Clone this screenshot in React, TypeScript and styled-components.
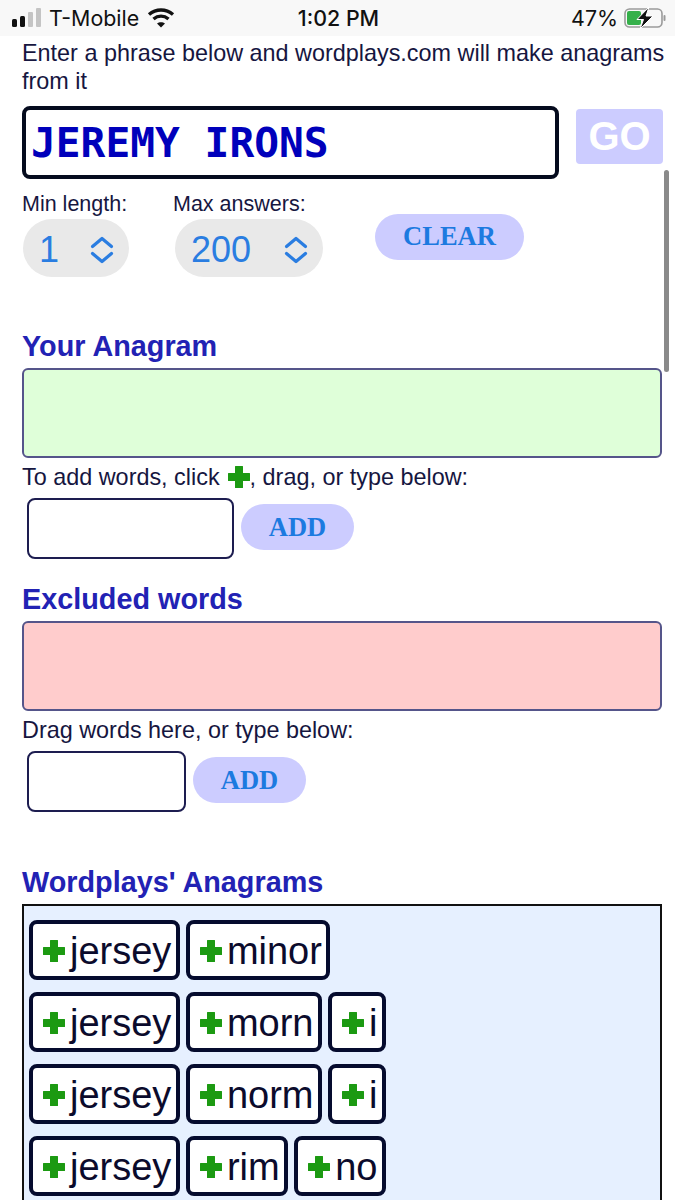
import React from 'react';
import styled, { createGlobalStyle } from 'styled-components';

const GlobalStyle = createGlobalStyle`
  html, body {
    margin: 0;
    padding: 0;
    height: 1200px;
    overflow: hidden;
    background: #fff;
    font-family: "Liberation Sans", Arial, sans-serif;
    color: #16163f;
  }
`;

const Page = styled.div`
  position: relative;
  width: 675px;
  height: 1200px;
  overflow: hidden;
`;

const StatusBar = styled.div`
  display: grid;
  grid-template-columns: 1fr auto 1fr;
  align-items: center;
  height: 36px;
  padding: 0 9px 0 11px;
  background: #f8f8f8;
  color: #111;
  font-family: "Inter", "Liberation Sans", sans-serif;
  font-size: 21.4px;
`;

const StatusLeft = styled.div`
  display: flex;
  align-items: center;
  gap: 8px;
`;

const StatusRight = styled.div`
  display: flex;
  align-items: center;
  justify-content: flex-end;
  gap: 6px;
`;

const Clock = styled.div`
  font-weight: 500;
`;

const Content = styled.div`
  padding: 3px 8px 0 22px;
`;

const Intro = styled.p`
  margin: 0 0 11px;
  font-size: 23.4px;
  line-height: 28px;
`;

const PhraseRow = styled.div`
  display: flex;
  align-items: flex-start;
  gap: 17px;
`;

const PhraseInput = styled.div`
  box-sizing: border-box;
  flex: none;
  width: 537px;
  height: 73px;
  padding: 0 5px;
  border: 4px solid #050b1e;
  border-radius: 8px;
  color: #0000bb;
  font-family: "DejaVu Sans Mono", "Liberation Mono", monospace;
  font-size: 41.2px;
  font-weight: 700;
  line-height: 66px;
  white-space: pre;
`;

const GoButton = styled.div`
  display: flex;
  flex: none;
  align-items: center;
  justify-content: center;
  width: 87px;
  height: 55px;
  margin-top: 3px;
  border-radius: 4px;
  background: #ccccff;
  color: #fff;
  font-size: 40px;
  font-weight: 700;
`;

const OptionsRow = styled.div`
  display: flex;
  align-items: flex-start;
  margin-top: 12px;
  height: 138px;
`;

const Option = styled.div<{ $width: number }>`
  width: ${(p) => p.$width}px;
`;

const OptionLabel = styled.div`
  font-size: 21.5px;
  line-height: 26px;
`;

const SelectPill = styled.div<{ $width: number; $offset: number }>`
  display: flex;
  align-items: center;
  justify-content: space-between;
  box-sizing: border-box;
  width: ${(p) => p.$width}px;
  height: 58px;
  margin: 2px 0 0 ${(p) => p.$offset}px;
  padding: 3px 15px 0 16px;
  border-radius: 29px;
  background: #e9e9e9;
  color: #2a7de1;
  font-size: 36px;
`;

const PillButton = styled.div<{ $width: number }>`
  display: flex;
  align-items: center;
  justify-content: center;
  width: ${(p) => p.$width}px;
  height: 46px;
  margin-bottom: 3px;
  border-radius: 23px;
  background: #ccccff;
  color: #1c7ae0;
  font-family: "Liberation Serif", "Times New Roman", serif;
  font-size: 26.5px;
  font-weight: 700;
`;

const ClearButton = styled(PillButton)`
  margin: 23px 0 0 53px;
  padding-bottom: 2px;
  box-sizing: border-box;
`;

const Heading = styled.h2`
  margin: 0 0 5px;
  color: #2222b4;
  font-size: 28.8px;
  font-weight: 700;
  line-height: 34px;
`;

const DropZone = styled.div<{ $bg: string }>`
  box-sizing: border-box;
  width: 640px;
  height: 90px;
  border: 2px solid #55558a;
  border-radius: 6px;
  background: ${(p) => p.$bg};
`;

const HelpText = styled.div`
  display: flex;
  align-items: center;
  margin-top: 5px;
  font-size: 23.4px;
  line-height: 28px;
`;

const AddRow = styled.div`
  display: flex;
  align-items: center;
  gap: 7px;
  margin: 7px 0 23px 5px;
`;

const WordInput = styled.div<{ $width: number }>`
  box-sizing: border-box;
  width: ${(p) => p.$width}px;
  height: 61px;
  border: 2px solid #1d1d50;
  border-radius: 8px;
  background: #fff;
`;

const AnagramSection = styled.div`
  margin-top: 53px;
`;

const AnagramBox = styled.div`
  box-sizing: border-box;
  width: 640px;
  height: 400px;
  padding: 14px 5px;
  border: 2px solid #111;
  background: #e6f0ff;
`;

const TileRow = styled.div`
  display: flex;
  gap: 6px;
  margin-bottom: 12px;
`;

const Tile = styled.div`
  display: flex;
  align-items: center;
  box-sizing: border-box;
  height: 60px;
  padding: 2px 4.5px 0 10px;
  border: 4px solid #050b2e;
  border-radius: 8px;
  background: #fff;
  color: #0b0b2c;
  font-size: 38px;
`;

const PlusGlyph = styled.svg`
  flex: none;
  width: 22px;
  height: 22px;
`;

const TilePlus = styled(PlusGlyph)`
  margin-right: 5px;
`;

const InlinePlus = styled(PlusGlyph)`
  margin-left: 8px;
`;

const ScrollThumb = styled.div`
  position: absolute;
  top: 170px;
  left: 664px;
  width: 5px;
  height: 202px;
  border-radius: 3px;
  background: #8a8a8a;
`;

const Plus: React.FC = () => (
  <path d="M7.500 0h7a.5.5 0 0 1 .5.5V7h6.500a.5.5 0 0 1 .5.5v7a.5.5 0 0 1-.5.5H15v6.500a.5.5 0 0 1-.5.5h-7a.5.5 0 0 1-.5-.5V15H.5a.5.5 0 0 1-.5-.5v-7A.5.5 0 0 1 .5 7H7V.5a.5.5 0 0 1 .5-.5z" fill="#1c9a12" />
);

const Chevrons: React.FC = () => (
  <svg width="24" height="28" viewBox="0 0 24 28" fill="none" stroke="#2a7de1" strokeWidth="3.2" strokeLinecap="round" strokeLinejoin="round">
    <path d="M2.500 10.500 12 2.500l9.500 8" />
    <path d="M2.500 17.500l9.500 8 9.500-8" />
  </svg>
);

const SignalIcon: React.FC = () => (
  <svg width="30" height="20" viewBox="0 0 30 20">
    <rect x="1" y="11" width="5" height="8" rx="1.500" fill="#111" />
    <rect x="9" y="8" width="5" height="11" rx="1.500" fill="#111" />
    <rect x="17" y="4" width="5" height="15" rx="1" fill="#c4c4c4" />
    <rect x="25" y="0" width="5" height="19" rx="1" fill="#c4c4c4" />
  </svg>
);

const WifiIcon: React.FC = () => (
  <svg width="28" height="22" viewBox="0 0 28 22" fill="none" stroke="#111" strokeWidth="3.400">
    <path d="M2 7.500c7-6 17-6 24 0" />
    <path d="M6.500 12c4.500-3.800 10.500-3.800 15 0" />
    <path d="M14 20.500l-4-4c2.300-1.800 5.700-1.800 8 0z" fill="#111" stroke="none" />
  </svg>
);

const BatteryIcon: React.FC = () => (
  <svg width="42" height="22" viewBox="0 0 42 22">
    <rect x="1" y="2" width="37" height="18" rx="4.500" fill="none" stroke="#9a9a9a" strokeWidth="1.600" />
    <rect x="3" y="4" width="14" height="14" rx="2" fill="#35b04a" />
    <rect x="39.500" y="8" width="2" height="6" rx="1" fill="#9a9a9a" />
    <path d="M25 0 13 12.500h6.500L16 22l13-13h-7z" fill="#111" stroke="#fff" strokeWidth="1" />
  </svg>
);

const rows = [
  ['jersey', 'minor'],
  ['jersey', 'morn', 'i'],
  ['jersey', 'norm', 'i'],
  ['jersey', 'rim', 'no'],
];

const App: React.FC = () => {
  return (
    <Page>
      <GlobalStyle />
      <StatusBar>
        <StatusLeft>
          <SignalIcon />
          <span>T-Mobile</span>
          <WifiIcon />
        </StatusLeft>
        <Clock>1:02 PM</Clock>
        <StatusRight>
          <span>47%</span>
          <BatteryIcon />
        </StatusRight>
      </StatusBar>
      <Content>
        <Intro>Enter a phrase below and wordplays.com will make anagrams from it</Intro>
        <PhraseRow>
          <PhraseInput>JEREMY IRONS</PhraseInput>
          <GoButton>GO</GoButton>
        </PhraseRow>
        <OptionsRow>
          <Option $width={151}>
            <OptionLabel>Min length:</OptionLabel>
            <SelectPill $width={106} $offset={1}>
              1
              <Chevrons />
            </SelectPill>
          </Option>
          <Option $width={149}>
            <OptionLabel>Max answers:</OptionLabel>
            <SelectPill $width={148} $offset={2}>
              200
              <Chevrons />
            </SelectPill>
          </Option>
          <ClearButton $width={149}>CLEAR</ClearButton>
        </OptionsRow>
        <Heading>Your Anagram</Heading>
        <DropZone $bg="#dfffd9" />
        <HelpText>
          To add words, click
          <InlinePlus viewBox="0 0 22 22"><Plus /></InlinePlus>
          , drag, or type below:
        </HelpText>
        <AddRow>
          <WordInput $width={207} />
          <PillButton $width={113}>ADD</PillButton>
        </AddRow>
        <Heading>Excluded words</Heading>
        <DropZone $bg="#ffcccc" />
        <HelpText>Drag words here, or type below:</HelpText>
        <AddRow>
          <WordInput $width={159} />
          <PillButton $width={113}>ADD</PillButton>
        </AddRow>
        <AnagramSection>
          <Heading>Wordplays' Anagrams</Heading>
          <AnagramBox>
            {rows.map((words, i) => (
              <TileRow key={i}>
                {words.map((word, j) => (
                  <Tile key={j}>
                    <TilePlus viewBox="0 0 22 22"><Plus /></TilePlus>
                    {word}
                  </Tile>
                ))}
              </TileRow>
            ))}
          </AnagramBox>
        </AnagramSection>
      </Content>
      <ScrollThumb />
    </Page>
  );
};

export default App;
